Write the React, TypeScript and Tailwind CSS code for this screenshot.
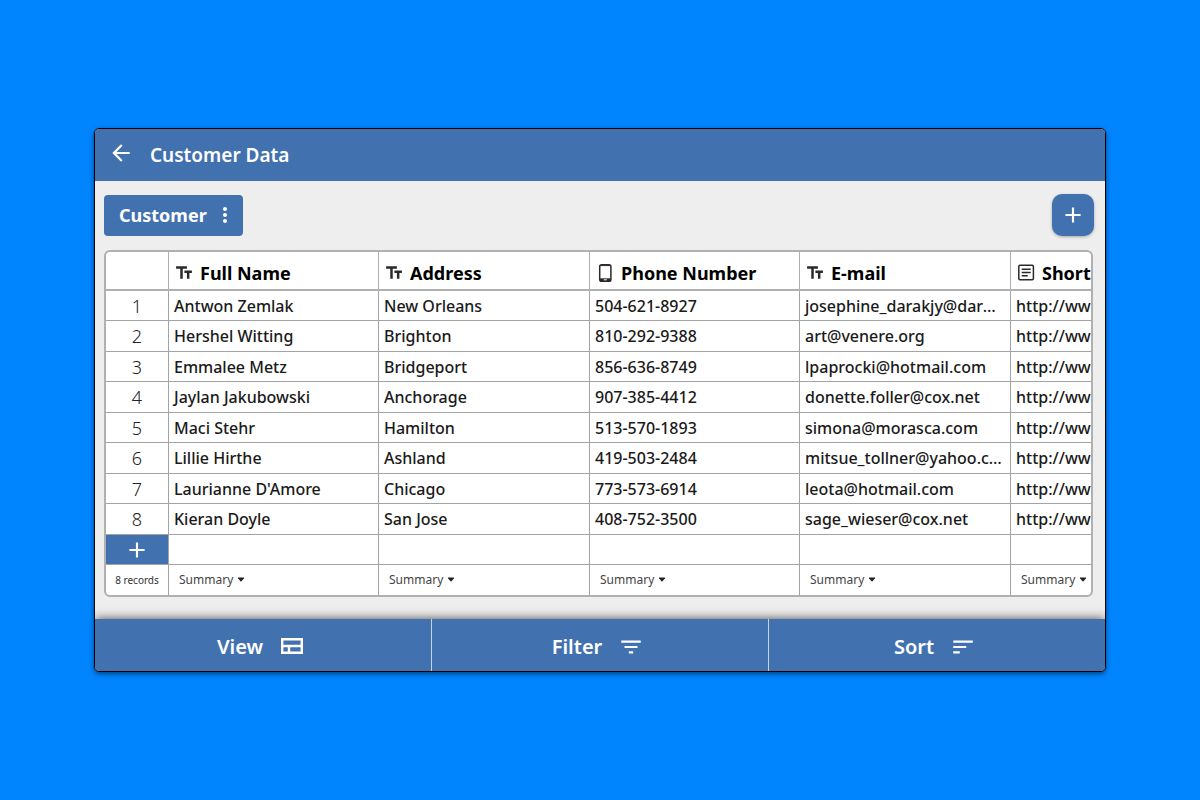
import type { ComponentType, ReactNode } from "react";
import { MdAdd, MdArrowBack, MdFilterList, MdMoreVert, MdSort, MdTextFields } from "react-icons/md";

type Column = { title: string; icon: ComponentType<{ className?: string }>; width: string };

function PhoneIcon({ className }: { className?: string }) {
  return (
    <svg viewBox="0 0 20 20" className={className} fill="none" stroke="currentColor" aria-hidden="true">
      <rect x="4.7" y="1.7" width="11.2" height="16.6" rx="1.8" strokeWidth="1.5" />
      <path d="M5 2.6h10.6" strokeWidth="1" />
      <path d="M5 16.7h10.6" strokeWidth="2.8" />
      <path d="M8.8 16.8h3" stroke="white" strokeWidth="1" />
    </svg>
  );
}

function ArticleIcon({ className }: { className?: string }) {
  return (
    <svg viewBox="0 0 20 20" className={className} fill="none" stroke="currentColor" strokeWidth="1.5" aria-hidden="true">
      <rect x="2.8" y="2.3" width="14.6" height="14.4" rx="1.2" />
      <path d="M5.7 6.2h9M5.7 9.5h9M5.7 12.8h6" />
    </svg>
  );
}

function ViewIcon() {
  return (
    <svg viewBox="0 0 26 26" className="size-[26px]" fill="none" stroke="currentColor" strokeWidth="2.4" aria-hidden="true">
      <path d="M3.2 5.2h19.6v13.6H3.2zM3 12h20M10 12v7" />
    </svg>
  );
}

const columns: Column[] = [
  { title: "Full Name", icon: MdTextFields, width: "w-[210px]" },
  { title: "Address", icon: MdTextFields, width: "w-[211px]" },
  { title: "Phone Number", icon: PhoneIcon, width: "w-[210px]" },
  { title: "E-mail", icon: MdTextFields, width: "w-[211px]" },
  { title: "Short", icon: ArticleIcon, width: "w-[210px]" },
];

const records = [
  ["Antwon Zemlak", "New Orleans", "504-621-8927", "josephine_darakjy@darakjy.org", "http://ww"],
  ["Hershel Witting", "Brighton", "810-292-9388", "art@venere.org", "http://ww"],
  ["Emmalee Metz", "Bridgeport", "856-636-8749", "lpaprocki@hotmail.com", "http://ww"],
  ["Jaylan Jakubowski", "Anchorage", "907-385-4412", "donette.foller@cox.net", "http://ww"],
  ["Maci Stehr", "Hamilton", "513-570-1893", "simona@morasca.com", "http://ww"],
  ["Lillie Hirthe", "Ashland", "419-503-2484", "mitsue_tollner@yahoo.com", "http://ww"],
  ["Laurianne D'Amore", "Chicago", "773-573-6914", "leota@hotmail.com", "http://ww"],
  ["Kieran Doyle", "San Jose", "408-752-3500", "sage_wieser@cox.net", "http://ww"],
];

const cell = "border-r border-b border-[#a3a3a3] p-0";

function FooterButton({ label, children }: { label: string; children: ReactNode }) {
  return (
    <button type="button" className="flex flex-1 items-center justify-center gap-4 pt-1 pr-1">
      <span>{label}</span>
      {children}
    </button>
  );
}

export default function App() {
  return (
    <div className="flex min-h-screen items-center justify-center bg-[#0085ff] px-[94px] font-['Noto_Sans',sans-serif]">
      <main className="w-full overflow-hidden rounded-[5px] border border-black bg-[#eeeeee] shadow-[0_2px_5px_rgba(0,0,0,0.5)]">
        <header className="flex h-[52px] items-center gap-4 bg-[#4271af] pl-[13px] text-white">
          <button type="button" aria-label="Back" className="pb-1">
            <MdArrowBack className="size-[26px]" />
          </button>
          <h1 className="text-[19px] font-semibold">Customer Data</h1>
        </header>

        <div className="flex items-center justify-between px-[9px] pt-[13px] pr-[11px] pb-[14px] text-white">
          <button type="button" className="flex h-[41px] items-center gap-1.5 rounded bg-[#4271af] pr-1.5 pl-[15px] text-[18px] font-bold">
            Customer
            <MdMoreVert className="size-6" />
          </button>
          <button type="button" aria-label="Add" className="flex size-[42px] items-center justify-center rounded-[10px] bg-[#4271af] shadow-[0_1px_3px_rgba(0,0,0,0.3)]">
            <MdAdd className="size-[26px]" />
          </button>
        </div>

        <section className="mr-3 mb-[22px] ml-[9px] overflow-hidden rounded-md border-2 border-[#b0b0b0] bg-white text-black">
          <table className="w-[1115px] table-fixed border-separate border-spacing-0">
            <thead>
              <tr className="h-[39px]">
                <th className="w-[63px] border-r border-b-2 border-[#b0b0b0] p-0" aria-label="Row" />
                {columns.map(({ title, icon: Icon, width }) => (
                  <th key={title} scope="col" className={`${width} border-r border-b-2 border-[#b0b0b0] p-0 pt-1 pl-[5px]`}>
                    <div className="flex items-center gap-1.5 text-[18px] leading-6 font-bold">
                      <Icon className="size-5 text-[#2a2a2a]" />
                      {title}
                    </div>
                  </th>
                ))}
              </tr>
            </thead>
            <tbody>
              {records.map((record, row) => (
                <tr key={record[0]} className="odd:h-[30px] even:h-[31px]">
                  <td className={`${cell} text-center text-[18px] leading-6 font-light text-[#222]`}>{row + 1}</td>
                  {record.map((value, i) => (
                    <td key={columns[i].title} className={`${cell} truncate pr-1.5 pl-[5px] text-[16px] leading-6 font-medium text-[#1a1a1a]`}>
                      {value}
                    </td>
                  ))}
                </tr>
              ))}
              <tr className="h-[30px]">
                <td className={cell}>
                  <button type="button" aria-label="Add record" className="flex h-[29px] w-full items-center justify-center bg-[#4271af] text-white">
                    <MdAdd className="size-[26px]" />
                  </button>
                </td>
                {columns.map(({ title }) => (
                  <td key={title} className={cell} />
                ))}
              </tr>
            </tbody>
            <tfoot>
              <tr className="h-[30px]">
                <td className="border-r border-[#a3a3a3] p-0 text-center text-[10px] text-[#333]">8 records</td>
                {columns.map(({ title }) => (
                  <td key={title} className="border-r border-[#a3a3a3] p-0 pl-2.5">
                    <button type="button" className="flex items-center gap-1 text-[12px] text-[#444]">
                      Summary
                      <svg viewBox="0 0 8 6" className="h-1.5 w-2" fill="#222" aria-hidden="true">
                        <path d="M1.3 .5h5.4q.7 0 .3.7L4.5 4.2q-.5.4-1 0L1 1.2Q.6.5 1.3.5z" />
                      </svg>
                    </button>
                  </td>
                ))}
              </tr>
            </tfoot>
          </table>
        </section>

        <footer className="flex h-[52px] divide-x divide-[#c5d3e6] bg-[#4271af] text-[20px] font-semibold text-white shadow-[0_0_10px_rgba(0,0,0,0.7)]">
          <FooterButton label="View">
            <ViewIcon />
          </FooterButton>
          <FooterButton label="Filter">
            <MdFilterList className="size-[26px]" />
          </FooterButton>
          <FooterButton label="Sort">
            <MdSort className="size-[26px]" />
          </FooterButton>
        </footer>
      </main>
    </div>
  );
}
